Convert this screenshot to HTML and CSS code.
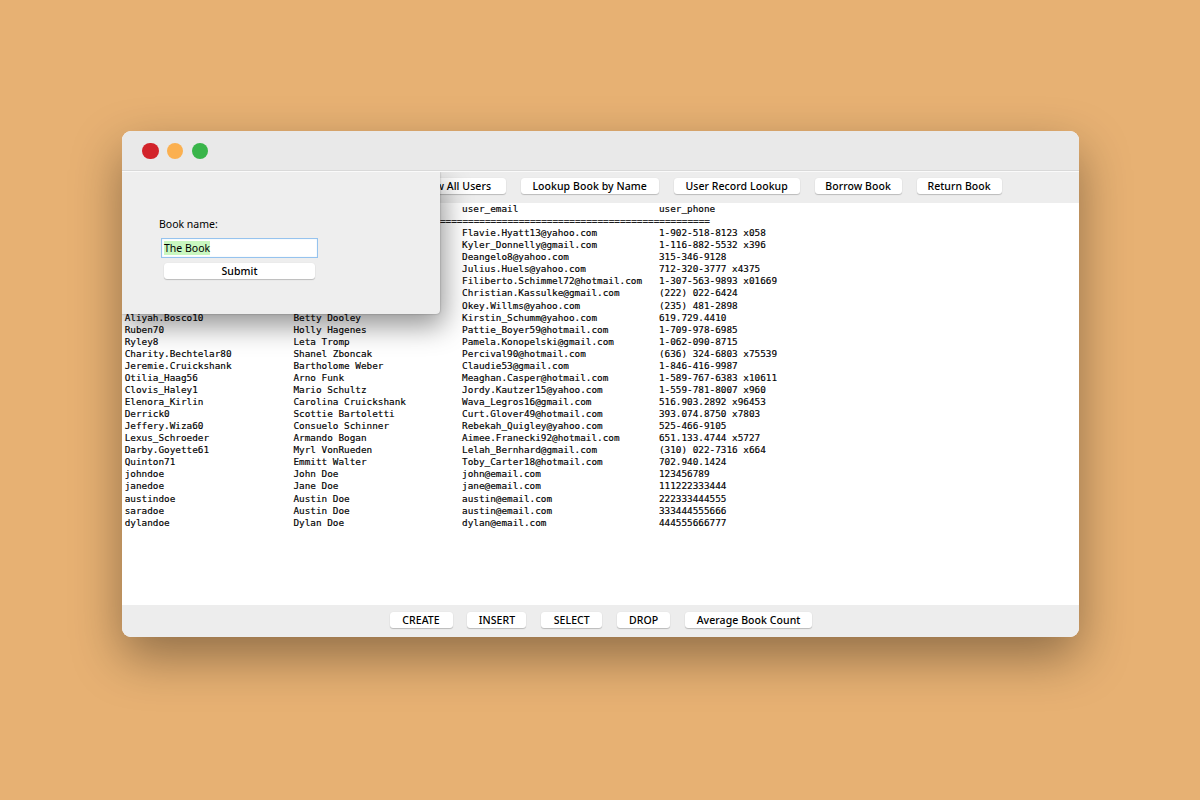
FILE: index.html
```html
<!DOCTYPE html>
<html lang="en">
<head>
<meta charset="utf-8">
<title>Library</title>
<link rel="stylesheet" href="styles.css">
</head>
<body>
<main class="window">
  <header class="titlebar"><i class="light red"></i><i class="light amber"></i><i class="light green"></i></header>
  <nav class="toolbar top">
    <button class="btn view">View All Users</button>
    <button class="btn lookup">Lookup Book by Name</button>
    <button class="btn record">User Record Lookup</button>
    <button class="btn borrow">Borrow Book</button>
    <button class="btn return">Return Book</button>
  </nav>
  <section class="output" id="output"></section>
  <footer class="toolbar bottom">
    <button class="btn create">CREATE</button>
    <button class="btn insert">INSERT</button>
    <button class="btn select">SELECT</button>
    <button class="btn drop">DROP</button>
    <button class="btn average">Average Book Count</button>
  </footer>
  <form class="dialog">
    <label class="label">Book name:</label>
    <div class="field"><span class="selection">The Book</span></div>
    <button type="button" class="btn submit">Submit</button>
  </form>
</main>
<script src="script.js"></script>
</body>
</html>
```

FILE: styles.css
```css
* { box-sizing: border-box; }
body {
  margin: 0;
  height: 800px;
  padding: 131px 121px 0 122px;
  overflow: hidden;
  background: #e7b173;
  font-family: "Noto Sans", sans-serif;
  color: #000;
}
.window {
  position: relative;
  display: flex;
  flex-direction: column;
  height: 506px;
  border-radius: 9px;
  background: #fff;
  box-shadow: 0 20px 50px rgba(0, 0, 0, .38);
}
.titlebar {
  display: flex;
  align-items: center;
  gap: 8.5px;
  height: 40px;
  padding: 1px 0 0 20.3px;
  border-radius: 9px 9px 0 0;
  border-bottom: 1px solid #d9d9d9;
  background: #e9e9e9;
}
.light { width: 16.3px; height: 16.3px; border-radius: 50%; }
.red { background: #d2232a; }
.amber { background: #fbb050; }
.green { background: #39b54a; }
.toolbar { display: flex; background: #ededed; }
.top {
  height: 32px;
  padding: 6px 77.4px 0 0;
  justify-content: flex-end;
  gap: 15px;
  border-top: 1px solid #fafafa;
}
.bottom {
  height: 32px;
  margin-top: auto;
  padding: 7px 0 0 267.5px;
  gap: 14.9px;
  border-radius: 0 0 9px 9px;
}
.btn {
  flex: none;
  height: 16px;
  padding: 0;
  border: 0;
  border-radius: 3px;
  background: #fff;
  box-shadow: 0 1px 1px rgba(0, 0, 0, .2), 0 0 1px rgba(0, 0, 0, .12);
  color: #000;
  font: 500 10.5px/15px "Noto Sans", sans-serif;
  letter-spacing: .07px;
  white-space: nowrap;
}
.top .btn, .bottom .btn { line-height: 14px; padding-bottom: 1px; }
.view { width: 100px; }
.lookup { width: 138px; }
.record { width: 126px; }
.borrow { width: 87px; }
.return { width: 85px; }
.create { width: 63px; }
.insert { width: 59px; }
.select { width: 61px; }
.drop { width: 53px; }
.average { width: 127px; }
.output {
  padding: 0 0 0 2.7px;
  font: 9.35px/12px "DejaVu Sans Mono", monospace;
  white-space: pre;
  -webkit-text-stroke: .15px #000;
}
.row {
  display: grid;
  grid-template-columns: 168.7px 168.7px 196.9px 1fr;
  height: 12.07px;
}
.row:nth-child(n + 3) { transform: translateY(.4px); }
.rule { height: 12.07px; margin-left: 315.2px; }
.dialog {
  position: absolute;
  left: 0;
  top: 41px;
  display: flex;
  flex-direction: column;
  align-items: flex-start;
  width: 318px;
  height: 142px;
  padding: 44px 0 0 37px;
  border-radius: 0 0 4px 0;
  background: #eee;
  box-shadow: 4px 12px 28px rgba(0, 0, 0, .42), 0 0 2px rgba(0, 0, 0, .35);
  clip-path: inset(0 -60px -60px 0);
}
.label { height: 16px; font-size: 10.5px; line-height: 16px; }
.field {
  width: 157px;
  height: 20px;
  margin: 6px 0 5px 2px;
  padding: 2px 0 0 2px;
  border: 1px solid #96c3ee;
  background: #fff;
  box-shadow: inset 0 0 1px #a9cff2;
  font-size: 10.5px;
  line-height: 14px;
}
.selection { display: inline-block; background: #c9f7c0; }
.submit { width: 151px; margin-left: 5px; }
```

FILE: script.js
```js
const rows = [
  ['', '', 'user_email', 'user_phone'],
  null,
  ['', '', 'Flavie.Hyatt13@yahoo.com', '1-902-518-8123 x058'],
  ['', '', 'Kyler_Donnelly@gmail.com', '1-116-882-5532 x396'],
  ['', '', 'Deangelo8@yahoo.com', '315-346-9128'],
  ['', '', 'Julius.Huels@yahoo.com', '712-320-3777 x4375'],
  ['', '', 'Filiberto.Schimmel72@hotmail.com', '1-307-563-9893 x01669'],
  ['', '', 'Christian.Kassulke@gmail.com', '(222) 022-6424'],
  ['', '', 'Okey.Willms@yahoo.com', '(235) 481-2898'],
  ['Aliyah.Bosco10', 'Betty Dooley', 'Kirstin_Schumm@yahoo.com', '619.729.4410'],
  ['Ruben70', 'Holly Hagenes', 'Pattie_Boyer59@hotmail.com', '1-709-978-6985'],
  ['Ryley8', 'Leta Tromp', 'Pamela.Konopelski@gmail.com', '1-062-090-8715'],
  ['Charity.Bechtelar80', 'Shanel Zboncak', 'Percival90@hotmail.com', '(636) 324-6803 x75539'],
  ['Jeremie.Cruickshank', 'Bartholome Weber', 'Claudie53@gmail.com', '1-846-416-9987'],
  ['Otilia_Haag56', 'Arno Funk', 'Meaghan.Casper@hotmail.com', '1-589-767-6383 x10611'],
  ['Clovis_Haley1', 'Mario Schultz', 'Jordy.Kautzer15@yahoo.com', '1-559-781-8007 x960'],
  ['Elenora_Kirlin', 'Carolina Cruickshank', 'Wava_Legros16@gmail.com', '516.903.2892 x96453'],
  ['Derrick0', 'Scottie Bartoletti', 'Curt.Glover49@hotmail.com', '393.074.8750 x7803'],
  ['Jeffery.Wiza60', 'Consuelo Schinner', 'Rebekah_Quigley@yahoo.com', '525-466-9105'],
  ['Lexus_Schroeder', 'Armando Bogan', 'Aimee.Franecki92@hotmail.com', '651.133.4744 x5727'],
  ['Darby.Goyette61', 'Myrl VonRueden', 'Lelah_Bernhard@gmail.com', '(310) 022-7316 x664'],
  ['Quinton71', 'Emmitt Walter', 'Toby_Carter18@hotmail.com', '702.940.1424'],
  ['johndoe', 'John Doe', 'john@email.com', '123456789'],
  ['janedoe', 'Jane Doe', 'jane@email.com', '111222333444'],
  ['austindoe', 'Austin Doe', 'austin@email.com', '222333444555'],
  ['saradoe', 'Austin Doe', 'austin@email.com', '333444555666'],
  ['dylandoe', 'Dylan Doe', 'dylan@email.com', '444555666777'],
];
const output = document.getElementById('output');
for (const row of rows) {
  const line = document.createElement('div');
  if (row) {
    line.className = 'row';
    for (const value of row) {
      const cell = document.createElement('span');
      cell.textContent = value;
      line.append(cell);
    }
  } else {
    line.className = 'rule';
    line.textContent = '='.repeat(48);
  }
  output.append(line);
}
```
